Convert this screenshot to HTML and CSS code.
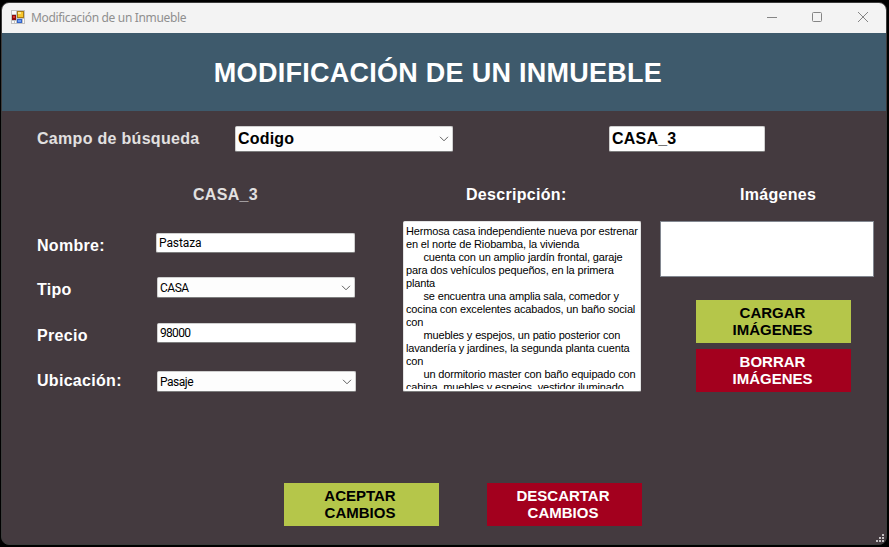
FILE: index.html
```html
<!DOCTYPE html>
<html lang="es">
<head>
<meta charset="utf-8">
<title>Modificación de un Inmueble</title>
<link rel="stylesheet" href="styles.css">
</head>
<body>
<div class="window">
  <div class="titlebar">
    <svg class="app-icon" width="14" height="14" viewBox="0 0 14 14" shape-rendering="crispEdges">
      <path fill="#c2c2c2" d="M0 0h14v14H0z"/>
      <path fill="#fafafa" d="M1 1h4v3H1zM1 11h2v2H1zM4 11h1v2H4zM12 9h1v4h-1z"/>
      <path fill="#8e0d0d" d="M1 5h4v5H1z"/><path fill="#d9382c" d="M2 6h2v2H2z"/>
      <path fill="#a87a14" d="M6 1h7v7H6z"/><path fill="#f7c72c" d="M7 2h5v5H7z"/><path fill="#ffe68a" d="M7 2h3v2H7z"/>
      <path fill="#3264c8" d="M6 9h5v4H6z"/><path fill="#6f9df2" d="M7 10h3v2H7z"/>
    </svg>
    <span class="caption">Modificación de un Inmueble</span>
    <svg class="controls" width="102" height="12" viewBox="0 0 102 12" fill="none" stroke="#858585">
      <path d="M0 5.500h10"/>
      <rect x="45.500" y="0.500" width="9" height="9" rx="1"/>
      <path d="M91 0l10 10M101 0l-10 10"/>
    </svg>
  </div>
  <header class="banner"><h1>MODIFICACIÓN DE UN INMUEBLE</h1></header>
  <main class="content">
    <div class="search">
      <span class="label dim">Campo de búsqueda</span>
      <div class="field big select codigo">Codigo<svg class="chevron" width="10" height="6" viewBox="0 0 10 6"><path d="M1 .8l4 4 4-4"/></svg></div>
      <div class="field big">CASA_3</div>
    </div>
    <div class="columns">
      <section class="details">
        <h2 class="label dim">CASA_3</h2>
        <div class="row nombre"><span class="label">Nombre:</span><div class="field t-pastaza">Pastaza</div></div>
        <div class="row tipo"><span class="label">Tipo</span><div class="field select t-casa">CASA<svg class="chevron" width="10" height="6" viewBox="0 0 10 6"><path d="M1 .8l4 4 4-4"/></svg></div></div>
        <div class="row precio"><span class="label">Precio</span><div class="field t-precio">98000</div></div>
        <div class="row ubicacion"><span class="label">Ubicación:</span><div class="field select t-pasaje">Pasaje<svg class="chevron" width="10" height="6" viewBox="0 0 10 6"><path d="M1 .8l4 4 4-4"/></svg></div></div>
      </section>
      <section class="description">
        <h2 class="label">Descripción:</h2>
        <div class="memo"><div class="memo-text">Hermosa casa independiente nueva por estrenar
en el norte de Riobamba, la vivienda
      cuenta con un amplio jardín frontal, garaje
para dos vehículos pequeños, en la primera
planta
      se encuentra una amplia sala, comedor y
cocina con excelentes acabados, un baño social
con
      muebles y espejos, un patio posterior con
lavandería y jardines, la segunda planta cuenta
con
      un dormitorio master con baño equipado con
cabina, muebles y espejos, vestidor iluminado</div></div>
      </section>
      <section class="images">
        <h2 class="label">Imágenes</h2>
        <div class="image-list"></div>
        <div class="button green">CARGAR<br>IMÁGENES</div>
        <div class="button red">BORRAR<br>IMÁGENES</div>
      </section>
    </div>
    <div class="actions">
      <div class="button green">ACEPTAR<br>CAMBIOS</div>
      <div class="button red">DESCARTAR<br>CAMBIOS</div>
    </div>
  </main>
  <svg class="grip" width="8" height="8" viewBox="0 0 8 8" fill="#c4c0c2"><path d="M6 0h2v2H6zM3 3h2v2H3zM6 3h2v2H6zM0 6h2v2H0zM3 6h2v2H3zM6 6h2v2H6z"/></svg>
</div>
</body>
</html>
```
FILE: styles.css
```css
* { box-sizing: border-box; }
body {
  margin: 0;
  height: 547px;
  padding: 2px 2px 2px 1px;
  background: #000;
  font-family: "Liberation Sans", Arial, sans-serif;
  overflow: hidden;
}
.window {
  position: relative;
  height: 543px;
  border: 1px solid #3c3c3c;
  border-radius: 8px;
  background: #443a3f;
  overflow: hidden;
}
.titlebar {
  display: flex;
  align-items: center;
  height: 30px;
  padding: 0 17px 0 9px;
  background: #f3f3f3;
}
.app-icon { margin-bottom: 2px; }
.caption {
  margin-left: 6px;
  font: 12px/16px "Noto Sans", sans-serif;
  letter-spacing: -0.34px;
  color: #8f8f8f;
}
.controls { margin-left: auto; }
.banner {
  height: 78px;
  padding-right: 12px;
  background: #3e5a6c;
  color: #fff;
  text-align: center;
}
h1 {
  margin: 0;
  font-size: 27px;
  line-height: 80px;
  letter-spacing: 0.27px;
}
.content { padding: 15px 12px 0 35px; }
.label {
  margin: 0;
  font-size: 16px;
  font-weight: bold;
  line-height: 18px;
  letter-spacing: 0.3px;
  color: #fff;
  white-space: nowrap;
}
.dim { color: #e2e0e0; }
.search {
  display: grid;
  grid-template-columns: 198px 218px 156px;
  align-items: center;
  height: 26px;
}
.search .field:last-child { margin-left: 156px; width: 156px; }
.field {
  height: 20px;
  padding-left: 2px;
  border: 1px solid #cfcfcf;
  border-bottom-color: #7d7d7d;
  border-radius: 2px;
  background: #fff;
  color: #000;
  font-family: Roboto, "Liberation Sans", sans-serif;
  font-size: 12px;
  line-height: 18px;
}
.big {
  height: 26px;
  font-family: "Liberation Sans", Arial, sans-serif;
  font-size: 16px;
  font-weight: bold;
  line-height: 24px;
  letter-spacing: 0.2px;
}
.select {
  display: flex;
  justify-content: space-between;
  align-items: center;
  padding-right: 3px;
  background: #fdfdfd;
}
.chevron { fill: none; stroke: #606060; }
.columns {
  display: grid;
  grid-template-columns: 319px 238px 214px;
  column-gap: 0;
  margin-top: 34px;
  height: 206px;
}
.details h2 { margin-left: 156px; }
.row {
  display: grid;
  grid-template-columns: 120px 199px;
}
.row .label { padding-top: 4px; }
.nombre { grid-template-columns: 119px 199px; margin-top: 29px; height: 44px; }
.tipo { grid-template-columns: 120px 198px; height: 46px; }
.tipo .field, .ubicacion .field { height: 21px; }
.precio { height: 48px; }
.ubicacion .label { padding-top: 1px; }
.t-pastaza { letter-spacing: -0.1px; }
.t-casa { letter-spacing: -0.5px; }
.t-precio { letter-spacing: -0.7px; }
.t-pasaje { letter-spacing: -0.5px; }
.description { margin-left: 47px; width: 238px; }
.description h2 { margin-left: 63px; }
.memo {
  height: 171px;
  margin-top: 17px;
  padding: 3px 1px 2px 2px;
  border: 1px solid #e4e4e4;
  border-bottom-color: #7d7d7d;
  border-radius: 2px;
  background: #fff;
}
.memo-text {
  height: 164px;
  overflow: hidden;
  color: #000;
  font-size: 11px;
  line-height: 13px;
  letter-spacing: -0.15px;
  white-space: pre;
}
.images { margin-left: 66px; width: 214px; }
.images h2 { margin-left: 80px; }
.image-list {
  height: 56px;
  margin: 17px 0 23px;
  border: 1px solid #828790;
  background: #fff;
}
.button {
  width: 155px;
  height: 43px;
  padding-top: 4px;
  font-size: 15px;
  font-weight: bold;
  line-height: 17px;
  text-align: center;
}
.images .button { margin-left: 36px; padding-right: 2px; }
.images .button + .button { margin-top: 6px; }
.green { background: #b5c64a; color: #000; }
.red { background: #a3001e; color: #fff; }
.actions {
  display: flex;
  gap: 48px;
  margin: 91px 0 0 247px;
}
.actions .button { padding-right: 3px; }
.grip {
  position: absolute;
  right: 2px;
  bottom: 2px;
}
```
